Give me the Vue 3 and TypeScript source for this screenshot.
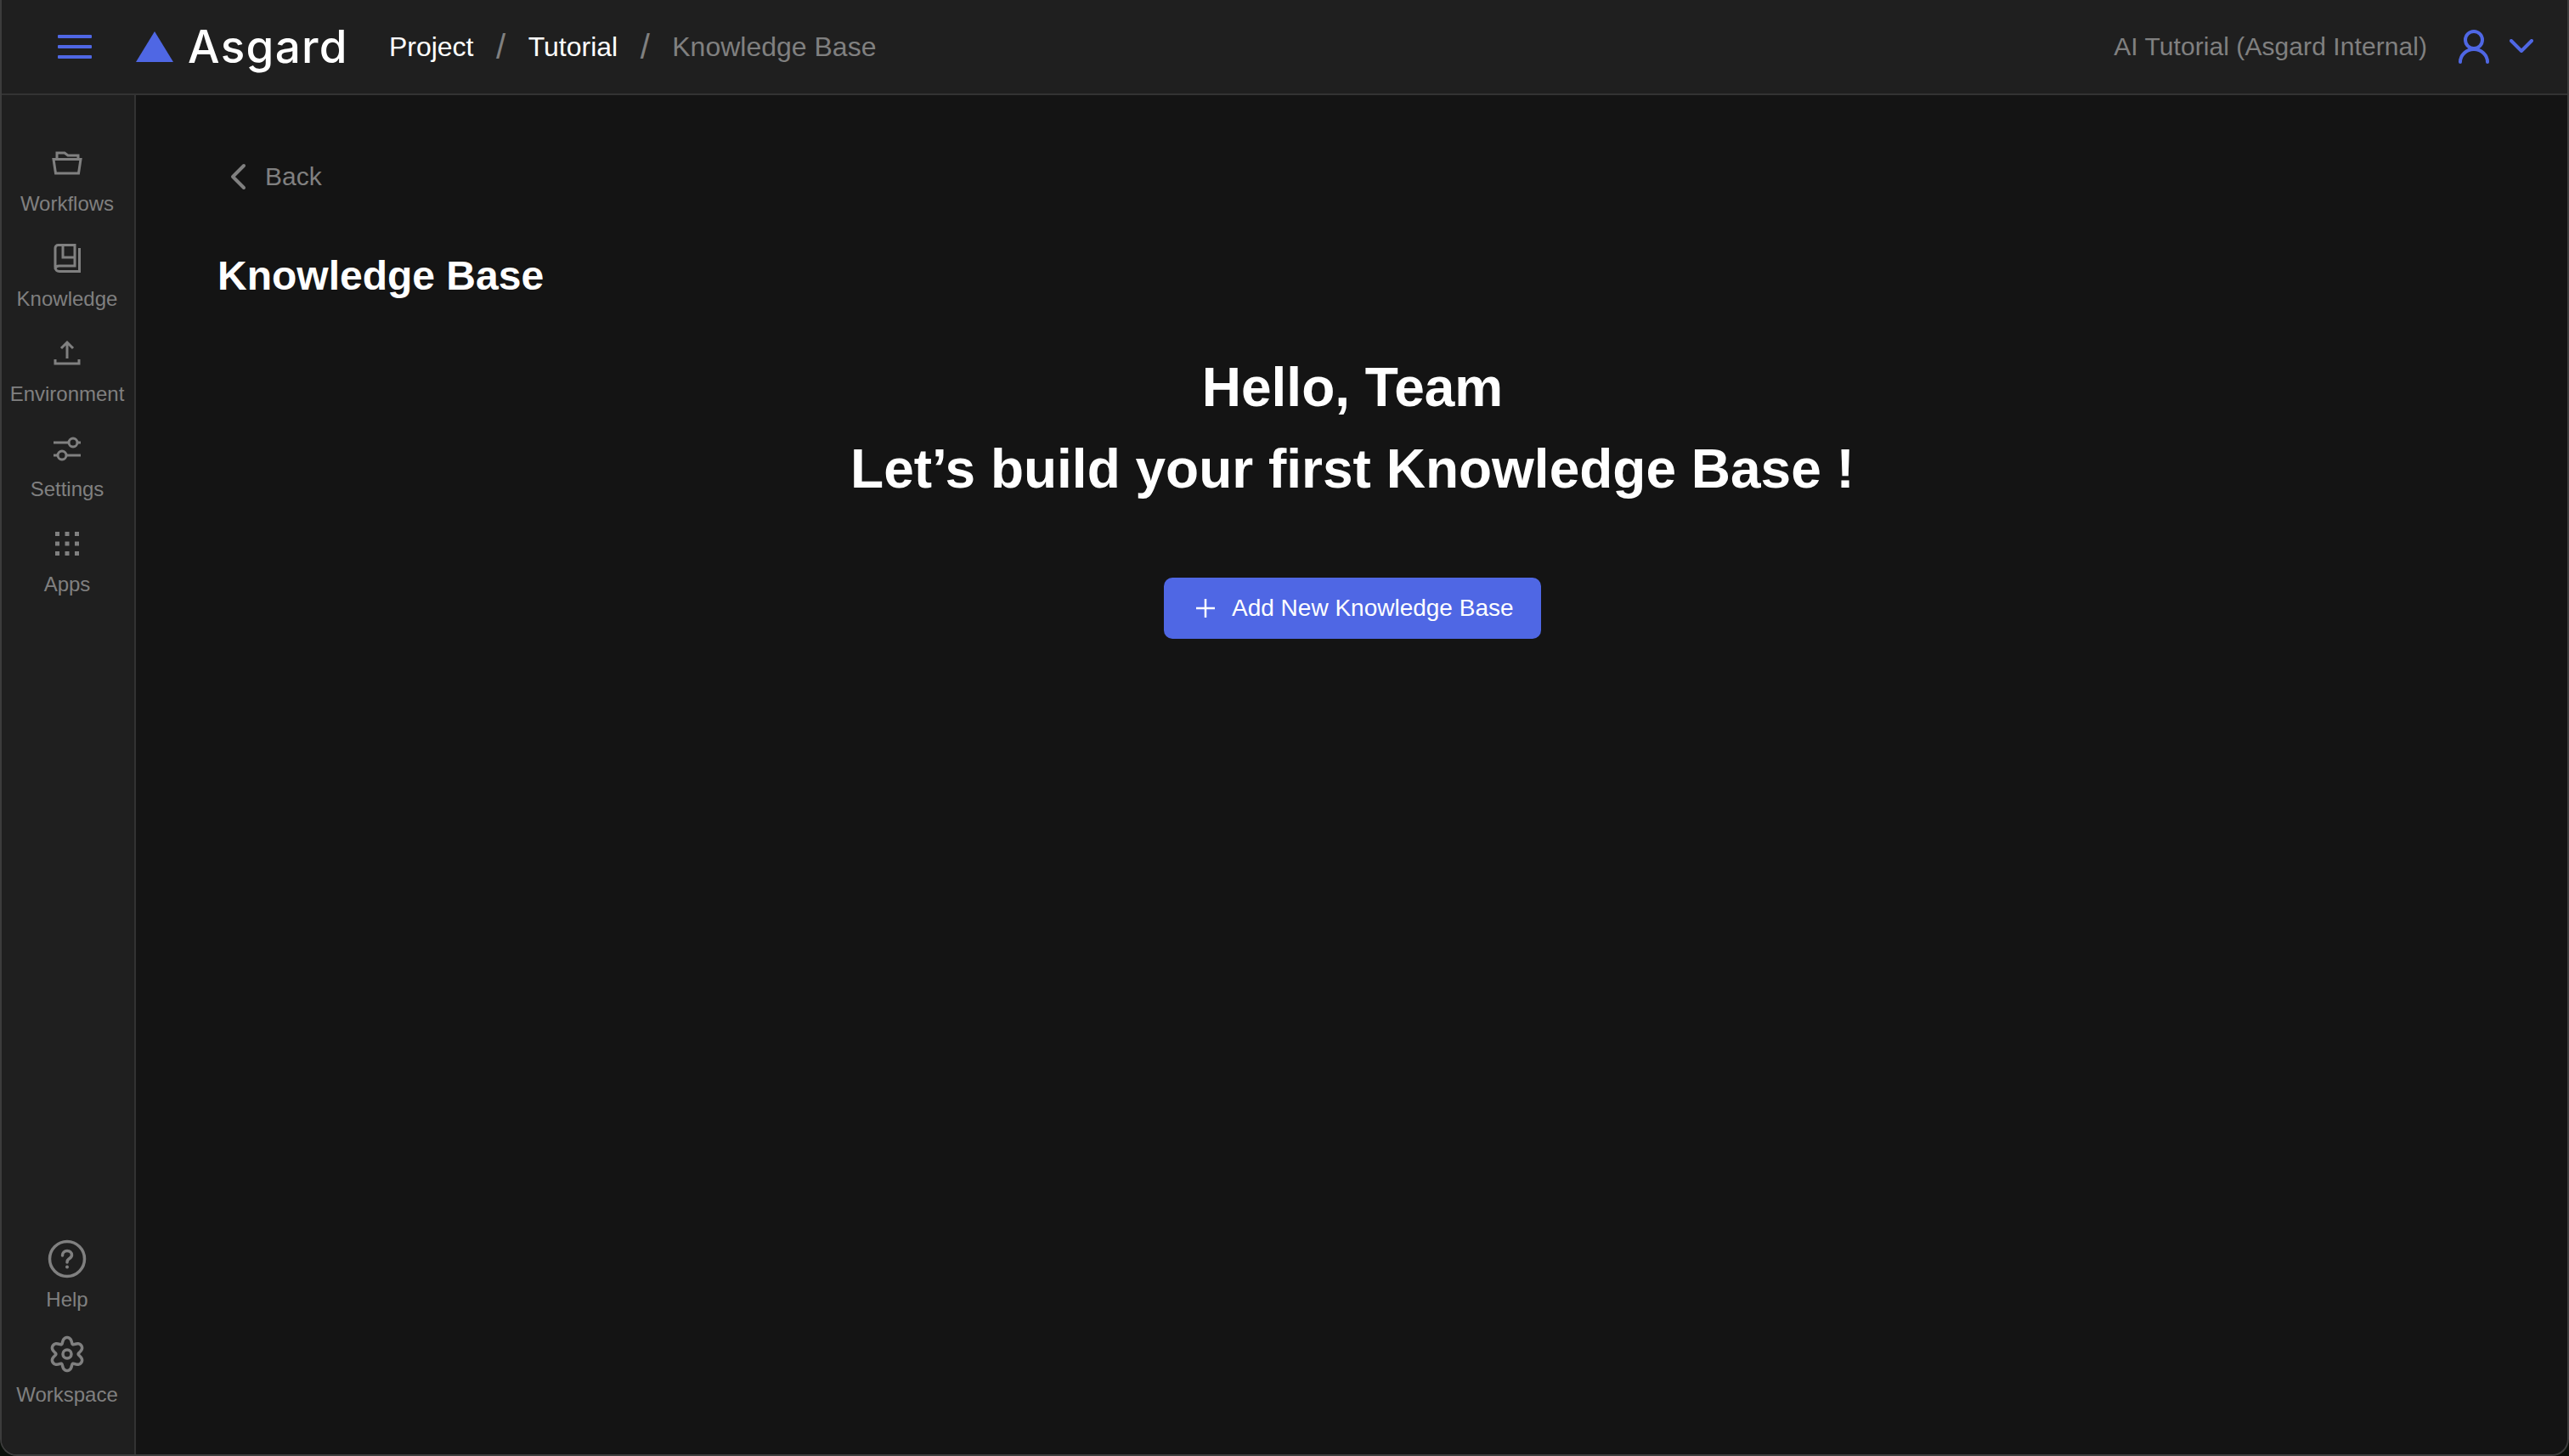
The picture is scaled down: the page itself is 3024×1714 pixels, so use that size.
<script setup lang="ts">
interface NavItem { label: string; icon: string }
const topNav: NavItem[] = [
  { label: 'Workflows', icon: 'folder' },
  { label: 'Knowledge', icon: 'book' },
  { label: 'Environment', icon: 'upload' },
  { label: 'Settings', icon: 'sliders' },
  { label: 'Apps', icon: 'grid' },
]
const bottomNav: NavItem[] = [
  { label: 'Help', icon: 'help' },
  { label: 'Workspace', icon: 'gear' },
]
const dots = [0, 1, 2].flatMap((r) => [0, 1, 2].map((c) => ({ x: 10 + c * 11.5, y: 10 + r * 11.5 })))
const gearPath = Array.from({ length: 120 }, (_, i) => {
  const t = (i / 120) * Math.PI * 2
  const r = 16.8 + 3.2 * Math.cos(6 * t) - 0.5 * Math.cos(12 * t)
  const x = 24 + r * Math.sin(t)
  const y = 24 - r * Math.cos(t)
  return `${i === 0 ? 'M' : 'L'}${x.toFixed(2)} ${y.toFixed(2)}`
}).join(' ') + 'Z'
</script>

<template>
  <div class="app">
    <header class="topbar">
      <div class="left">
        <svg class="burger" width="40" height="28" viewBox="0 0 40 28">
          <rect x="0" y="0" width="40" height="4" rx="1" />
          <rect x="0" y="12" width="40" height="4" rx="1" />
          <rect x="0" y="24" width="40" height="4" rx="1" />
        </svg>
        <svg class="tri" width="44" height="36" viewBox="0 0 44 36"><path d="M22 0 44 36H0Z" /></svg>
        <span class="logo">Asgard</span>
        <nav class="crumbs">
          <span class="crumb on">Project</span>
          <span class="sep">/</span>
          <span class="crumb on">Tutorial</span>
          <span class="sep">/</span>
          <span class="crumb">Knowledge Base</span>
        </nav>
      </div>
      <div class="right">
        <span class="org">AI Tutorial (Asgard Internal)</span>
        <svg class="user" width="38" height="42" viewBox="0 0 38 42" fill="none">
          <circle cx="19" cy="13" r="10" />
          <path d="M3 39c0-8 7-15 16-15s16 7 16 15" />
        </svg>
        <svg class="chev" width="28" height="18" viewBox="0 0 28 18" fill="none"><path d="M2 2l12 12L26 2" /></svg>
      </div>
    </header>
    <div class="body">
      <aside class="side">
        <div class="group">
          <div v-for="item in topNav" :key="item.label" class="item">
            <svg class="ico" width="48" height="48" viewBox="0 0 48 48" fill="none">
              <template v-if="item.icon === 'folder'">
                <path d="M12 19v-7h9l4 3h12v4" />
                <path d="M8 19.500h32l-2.500 16.500h-27Z" />
              </template>
              <template v-else-if="item.icon === 'book'">
                <path d="M38.500 12v27.500H15c-3 0-5-2-5-5V12c0-2 1.500-3.500 3.500-3.500H33V33H15c-3 0-5 1.500-5 4" />
                <path d="M19 8.500V23h14" />
              </template>
              <template v-else-if="item.icon === 'upload'">
                <path d="M24 11v19M17 18l7-7 7 7" />
                <path d="M10 31v5h28v-5" />
              </template>
              <template v-else-if="item.icon === 'sliders'">
                <path d="M8 17h18M36 17h4M8 32h5M23 32h17" />
                <circle cx="31" cy="17" r="5" />
                <circle cx="18" cy="32" r="5" />
              </template>
              <template v-else>
                <rect v-for="(d, i) in dots" :key="i" :x="d.x" :y="d.y" width="5" height="5" class="dot" />
              </template>
            </svg>
            <span class="lbl">{{ item.label }}</span>
          </div>
        </div>
        <div class="group">
          <div v-for="item in bottomNav" :key="item.label" class="item">
            <svg class="ico heavy" width="48" height="48" viewBox="0 0 48 48" fill="none">
              <template v-if="item.icon === 'help'">
                <circle cx="24" cy="24" r="20.500" />
                <path d="M18.500 20c0-3.500 2.500-5.500 5.500-5.500s5.500 2 5.500 5c0 2.500-2 3.500-3.500 4.500-1.500 1-2 2-2 4" />
                <circle cx="24" cy="33.500" r="2" class="dot" />
              </template>
              <template v-else>
                <circle cx="24" cy="24" r="5" />
                <path :d="gearPath" />
              </template>
            </svg>
            <span class="lbl">{{ item.label }}</span>
          </div>
        </div>
      </aside>
      <main class="main">
        <div class="back">
          <svg width="20" height="32" viewBox="0 0 20 32" fill="none"><path d="M17 3 4 16l13 13" /></svg>
          <span>Back</span>
        </div>
        <h1 class="title">Knowledge Base</h1>
        <section class="hero">
          <h2>Hello, Team</h2>
          <h2>Let’s build your first Knowledge Base !</h2>
          <button class="add" type="button">
            <svg width="22" height="22" viewBox="0 0 22 22" fill="none"><path d="M11 0v22M0 11h22" /></svg>
            <span>Add New Knowledge Base</span>
          </button>
        </section>
      </main>
    </div>
  </div>
</template>

<style>
html, body { margin: 0; background: #0a0f0a; }
</style>

<style scoped>
.app {
  height: 1714px;
  width: 3024px;
  box-sizing: border-box;
  display: flex;
  flex-direction: column;
  overflow: hidden;
  border: 2px solid #3c3c3c;
  border-top: 0;
  border-radius: 0 0 20px 20px;
  background: #141414;
  font-family: "Liberation Sans", Arial, sans-serif;
  color: #fff;
}
.topbar {
  height: 110px;
  flex: none;
  border-bottom: 2px solid #333;
  background: #1f1f1f;
  display: flex;
  align-items: center;
  justify-content: space-between;
  padding: 0 40px 0 66px;
}
.left, .right, .crumbs { display: flex; align-items: center; }
.burger rect { fill: #4f67e4; }
.tri { margin-left: 52px; }
.tri path { fill: #4f67e4; }
.logo {
  margin-left: 17px;
  font-family: Inter, sans-serif;
  font-size: 53px;
  font-weight: 500;
  letter-spacing: 1.300px;
  line-height: 60px;
  color: #fff;
}
.crumbs { margin-left: 48px; font-size: 32px; color: #808080; }
.crumb.on { color: #fff; }
.sep { margin: 0 26.500px; font-size: 40px; color: #808080; font-weight: 400; }
.org { font-size: 30px; letter-spacing: 0.070px; color: #808080; }
.user { margin-left: 36px; }
.user circle, .user path, .chev path { stroke: #4f67e4; stroke-width: 4; stroke-linecap: round; stroke-linejoin: round; }
.chev { margin-left: 23px; }
.body { flex: 1; display: flex; min-height: 0; }
.side {
  width: 154px;
  flex: none;
  border-right: 2px solid #333;
  background: #1f1f1f;
  display: flex;
  flex-direction: column;
  justify-content: space-between;
  padding: 56px 2px 46px 0;
}
.group { display: flex; flex-direction: column; gap: 16px; }
.item { display: flex; flex-direction: column; align-items: center; height: 96px; }
.ico { flex: none; }
.ico path, .ico circle { stroke: #808080; stroke-width: 3; stroke-linejoin: miter; }
.ico.heavy path, .ico.heavy circle { stroke-width: 3.500; stroke-linejoin: round; stroke-linecap: round; }
.ico .dot, .ico.heavy .dot { fill: #808080; stroke: none; }
.lbl { font-size: 24px; line-height: 40px; color: #808080; margin-top: 4px; white-space: nowrap; }
.main { flex: 1; min-width: 0; padding-top: 72px; }
.back {
  padding-left: 110px;
  display: flex;
  align-items: center;
  gap: 22px;
  height: 48px;
  font-size: 30px;
  color: #808080;
}
.back path { stroke: #808080; stroke-width: 4; stroke-linecap: round; stroke-linejoin: round; }
.title { margin: 0; padding: 65px 0 0 96px; font-size: 48px; line-height: 56px; font-weight: 700; color: #fff; }
.hero { display: flex; flex-direction: column; align-items: center; margin-top: 55px; padding-left: 2px; }
.hero h2 { margin: 0; font-size: 64px; line-height: 96px; font-weight: 700; color: #fff; }
.add {
  margin-top: 80px;
  width: 444px;
  height: 72px;
  border: 0;
  border-radius: 10px;
  background: #4f67e4;
  color: #fff;
  font-family: inherit;
  font-size: 28px;
  display: flex;
  align-items: center;
  gap: 20px;
  padding: 0 0 0 38px;
}
.add path { stroke: #fff; stroke-width: 2.500; }
</style>
